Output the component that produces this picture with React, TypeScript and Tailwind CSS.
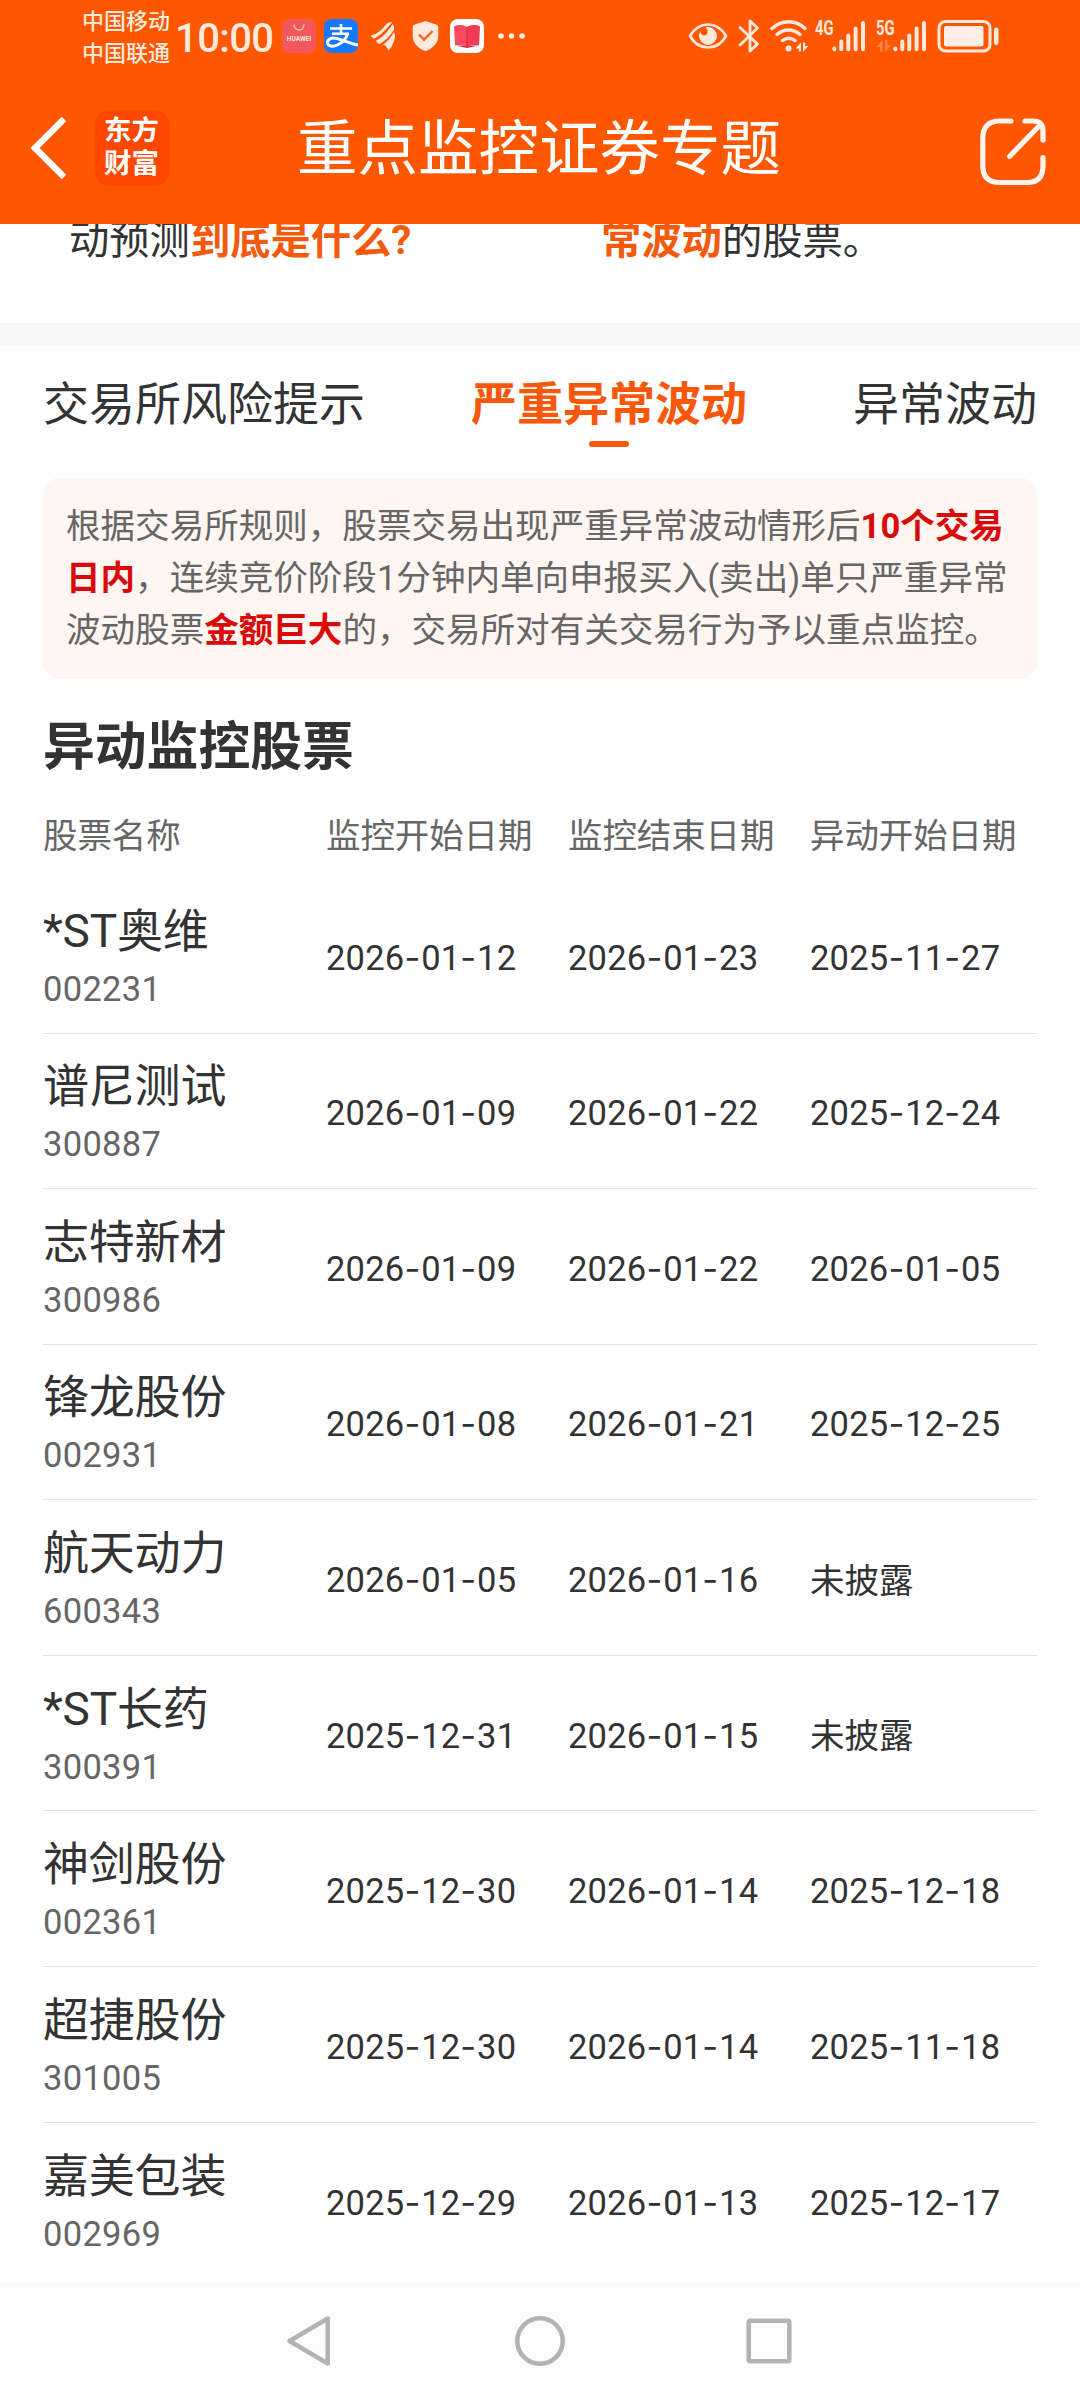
type Stock = {
	name: string
	code: string
	start: string
	end: string
	move: string
}

const stocks: Stock[] = [
	{ name: "*ST奥维", code: "002231", start: "2026-01-12", end: "2026-01-23", move: "2025-11-27" },
	{ name: "谱尼测试", code: "300887", start: "2026-01-09", end: "2026-01-22", move: "2025-12-24" },
	{ name: "志特新材", code: "300986", start: "2026-01-09", end: "2026-01-22", move: "2026-01-05" },
	{ name: "锋龙股份", code: "002931", start: "2026-01-08", end: "2026-01-21", move: "2025-12-25" },
	{ name: "航天动力", code: "600343", start: "2026-01-05", end: "2026-01-16", move: "未披露" },
	{ name: "*ST长药", code: "300391", start: "2025-12-31", end: "2026-01-15", move: "未披露" },
	{ name: "神剑股份", code: "002361", start: "2025-12-30", end: "2026-01-14", move: "2025-12-18" },
	{ name: "超捷股份", code: "301005", start: "2025-12-30", end: "2026-01-14", move: "2025-11-18" },
	{ name: "嘉美包装", code: "002969", start: "2025-12-29", end: "2026-01-13", move: "2025-12-17" },
]

function SignalBars() {
	return (
		<svg width="34" height="33" viewBox="0 0 34 33" stroke="#ffe9dc" strokeWidth="4" strokeLinecap="round">
			<path d="M2.3 29.5v.8M9.3 22.5v7.8M16.3 16.5v13.8M23.6 9.5v20.8M31 4v26.3" />
		</svg>
	)
}

function StatusBar() {
	return (
		<div className="flex h-[75px] items-start text-[#ffe9dc]">
			<div className="ml-[82px] mt-[6px] w-[93px] whitespace-nowrap text-[22px] font-medium leading-[32px]">
				<div>中国移动</div>
				<div>中国联通</div>
			</div>
			<div className="mt-[15px] w-[107px] whitespace-nowrap text-[40px] font-medium leading-[48px] tracking-[-0.6px]">
				10:00
			</div>

			{/* Notification icons */}
			<div className="mt-[19px] flex h-[34px] items-center">
				<div className="flex h-[34px] w-[34px] flex-col items-center rounded-[8px] bg-[#f2585b]">
					<svg className="mt-[5px]" width="14" height="8" viewBox="0 0 14 8" fill="none" stroke="#ffc3b4" strokeWidth="1.5" strokeLinecap="round">
						<path d="M2 1c.5 3.5 2.5 5 5 5s4.5-1.5 5-5" />
					</svg>
					<span className="mt-[3px] text-[6.5px] font-bold leading-[8px]">HUAWEI</span>
				</div>
				<div className="ml-[8px] h-[34px] w-[34px] overflow-hidden rounded-[8px] bg-[#1677ff]">
					<svg width="34" height="34" viewBox="0 0 34 34" fill="none" stroke="#fff">
						<path d="M6 9.5h22M17 5v9.500M8 14.7h17" strokeWidth="2.600" />
						<path d="M24 14.5c-2 5-6 9.500-10.500 11.500C9 28 3.500 27.500 3.500 23.500c0-3.500 4-5 8-4.300 6 1 13 5.300 23 7" strokeWidth="3" />
					</svg>
				</div>
				<svg className="ml-[13px]" width="25" height="30" viewBox="0 0 25 30" fill="#ffe9dc">
					<path d="M0 14.5C5 13.5 10 10 14 4.5c2.500-3 5-4 7-3C16 7.500 9 15 3.500 17.500 1.500 17.500.5 16 0 14.500z" />
					<path d="M5 19.5C11 17 17 11 21.500 3c1.500 1.500 2 4 1.500 6-4 6-9 11-14.500 14C6.500 22.500 5.500 21 5 19.500z" />
					<path d="M12 23.5c4.500-3 8-7 11-12.500 1.500 2.500 1 6 0 9-1 3.500-3 7-5.500 9.500-1-2.500-2.500-5-5.500-6z" />
				</svg>
				<svg className="ml-[16px]" width="27" height="32" viewBox="0 0 27 32">
					<path d="M13.500 1 24 4.500c1.500.5 2.300 1.500 2.300 3V16c0 7-5.500 12.500-12.800 15.200C6 28.500.7 23 .7 16V7.500c0-1.500.8-2.500 2.300-3z" fill="#ffe9dc" />
					<path d="m7 14.500 5 5.200 8.500-8.700" fill="none" stroke="#f06a2a" strokeWidth="2.500" />
				</svg>
				<div className="ml-[11px] flex h-[34px] w-[34px] items-center justify-center rounded-[8px] bg-white">
					<svg width="28" height="24" viewBox="0 0 28 24">
						<path d="M2.500 21.500h23L14 24z" fill="#c22740" />
						<path d="M1 2.500C5 .5 10 .5 14 3v20c-4-2-8-2.500-12-1.500z" fill="#fb4a60" />
						<path d="M27 2.500C23 .5 18 .5 14 3v20c4-2 8-2.500 12-1.500z" fill="#f23c54" />
						<path d="M14 3v20" stroke="#d92c46" strokeWidth="1.200" />
					</svg>
				</div>
				<svg className="ml-[13px]" width="28" height="8" viewBox="0 0 28 8" fill="#ffe9dc">
					<circle cx="4" cy="4" r="2.800" />
					<circle cx="14.500" cy="4" r="2.800" />
					<circle cx="25" cy="4" r="2.800" />
				</svg>
			</div>

			{/* System icons */}
			<div className="ml-[163px] mt-[19px] flex h-[34px] items-start">
				<svg className="mt-[3px]" width="40" height="28" viewBox="0 0 40 28">
					<path d="M2 14C6.500 6 12.500 2.500 20 2.500S33.500 6 38 14c-4.500 8-10.500 11.500-18 11.500S6.500 22 2 14z" fill="none" stroke="#ffe9dc" strokeWidth="2.700" strokeLinejoin="round" />
					<path d="M20 5a9 9 0 1 1-9 9c0-1.800.5-3 1.200-4.200 1 3 3 4.200 5 3.700C20 12.500 20.500 8 17.500 5.300 18.300 5 19 5 20 5z" fill="#ffe9dc" />
				</svg>
				<svg className="ml-[10px]" width="22" height="34" viewBox="0 0 22 34" fill="none" stroke="#ffe9dc" strokeWidth="2.800" strokeLinecap="round" strokeLinejoin="round">
					<path d="M2 8.500 19.500 25 12 32V2l7.500 7L2 26" />
				</svg>
				<svg className="ml-[10px]" width="39" height="34" viewBox="0 0 39 34" fill="none" stroke="#ffe9dc" strokeWidth="3.400" strokeLinecap="round">
					<path d="M2 9.500c10-9 23.500-9 33 0M7 15.500c7-6 16-6 23 0M12.500 21.500c4-3 8.500-3 12.500 0" />
					<circle cx="18.500" cy="29.500" r="3" fill="#ffe9dc" stroke="none" />
					<path d="M25.500 29.500 31 23.500v9h-2.200v-3zM38.500 27l-5.500 6v-9.500h2.200V27z" fill="#ffe9dc" stroke="none" />
				</svg>
				<div className="ml-[6px] flex items-start">
					<span className="w-[17px] origin-left scale-x-[.74] font-['Roboto'] text-[20px] font-bold leading-[18px]">4G</span>
					<SignalBars />
				</div>
				<div className="ml-[10px] flex items-start">
					<div className="w-[17px]">
						<span className="block origin-left scale-x-[.74] font-['Roboto'] text-[20px] font-bold leading-[18px]">5G</span>
						<svg className="mt-[3px]" width="16" height="12" viewBox="0 0 16 12" fill="#ff8144">
							<path d="M0 7 6.500 0v12H4V7zM15.500 5 9 12V0h2.500v5z" />
						</svg>
					</div>
					<SignalBars />
				</div>
				<svg className="ml-[10px]" width="62" height="34" viewBox="0 0 62 34">
					<rect x="2" y="2.500" width="51" height="29.500" rx="6.500" fill="none" stroke="#ffe9dc" strokeWidth="3" />
					<rect x="7" y="7" width="39.500" height="20.500" rx="2" fill="#ffeee5" />
					<rect x="57" y="8.500" width="4.500" height="17.500" rx="2.200" fill="#ffe9dc" />
				</svg>
			</div>
		</div>
	)
}

function TitleBar() {
	return (
		<div className="flex h-[149px] items-start text-white">
			<svg className="ml-[29px] mt-[41px]" width="40" height="64" viewBox="0 0 40 64" fill="none" stroke="#fff" strokeWidth="6.500">
				<path d="M35 3 6 32l29 29" />
			</svg>
			<div className="ml-[25px] mt-[35px] h-[76px] w-[76px] rounded-[16px] bg-[#ff4700] pl-[10px] pt-[4px] text-[27.5px] font-bold leading-[33px]">
				<div>东方</div>
				<div>财富</div>
			</div>
			<h1 className="ml-[127px] mt-[35px] w-[683px] whitespace-nowrap text-[60.5px] font-normal leading-[80px]">
				重点监控证券专题
			</h1>
			<svg className="mt-[42px]" width="68" height="70" viewBox="0 0 68 70" fill="none" stroke="#fff3ec" strokeWidth="5.200" strokeLinecap="round" strokeLinejoin="round">
				<path d="M31 4H20Q2.800 4 2.800 21v28q0 16.500 17.200 16.500h27Q63 65.500 63 49v-8.500M45 4h8q10 0 10 10V23M61 7 29.500 39.500" />
			</svg>
		</div>
	)
}

function DateText({ value }: { value: string }) {
	if (!value.includes("-")) return <span className="pt-[6px]">{value}</span>

	return (
		<span className="pt-[5px] tracking-[0.22px]">
			{value.split("-").map((part, i) => (
				<span key={i}>
					{i > 0 && <span className="font-['Inter'] tracking-[0.8px]">-</span>}
					{part}
				</span>
			))}
		</span>
	)
}

function StockRow({ stock, last }: { stock: Stock; last: boolean }) {
	return (
		<div
			className={
				last
					? "grid h-[155.57px] grid-cols-[283px_242px_242px_227px] items-center"
					: "grid h-[155.57px] grid-cols-[283px_242px_242px_227px] items-center border-b border-[#e3e3e3]"
			}
		>
			<div className="pt-[3px]">
				<div className="text-[46px] leading-[64px] tracking-[-0.2px]">{stock.name}</div>
				<div className="text-[34.5px] leading-[52px] tracking-[0.3px] text-[#666]">{stock.code}</div>
			</div>
			<DateText value={stock.start} />
			<DateText value={stock.end} />
			<DateText value={stock.move} />
		</div>
	)
}

export default function App() {
	return (
		<div className="flex h-[2400px] w-[1080px] flex-col overflow-hidden bg-white font-['Roboto','Noto_Sans_CJK_SC',sans-serif] text-[#333]">
			<header className="h-[224px] shrink-0 bg-[#ff5600]">
				<StatusBar />
				<TitleBar />
			</header>

			{/* Bottom of the intro cards, scrolled under the header */}
			<section className="flex h-[99px] shrink-0 items-start overflow-hidden whitespace-nowrap pl-[69px] text-[40.3px] leading-[60px]">
				<p className="-mt-[13px] w-[532px]">
					动预测<b className="text-[#f55a0c]">到底是什么?</b>
				</p>
				<p className="-mt-[13px]">
					<b className="text-[#f55a0c]">常波动</b>的股票。
				</p>
			</section>
			<div className="h-[23px] shrink-0 bg-[#f7f7fa]" />

			<main className="flex-1 overflow-hidden px-[43px]">
				<nav className="flex h-[132px] justify-between pt-[25px] text-[46px] leading-[66px]">
					<span>交易所风险提示</span>
					<div className="flex flex-col items-center font-bold text-[#f9580a]">
						<span>严重异常波动</span>
						<i className="mt-[4px] h-[6px] w-[40px] rounded-full bg-[#f55a0c]" />
					</div>
					<span>异常波动</span>
				</nav>

				<div className="h-[201px] whitespace-nowrap rounded-[17px] bg-[#fff5f1] pl-[23px] pt-[22px] text-[34.55px] leading-[52px] text-[#666]">
					<div>
						根据交易所规则，股票交易出现严重异常波动情形后<b className="text-[#d90a0a]">10个交易</b>
					</div>
					<div>
						<b className="text-[#d90a0a]">日内</b>，连续竞价阶段1分钟内单向申报买入(卖出)单只严重异常
					</div>
					<div>
						波动股票<b className="text-[#d90a0a]">金额巨大</b>的，交易所对有关交易行为予以重点监控。
					</div>
				</div>

				<h2 className="mt-[29px] text-[51.8px] font-bold leading-[80px]">异动监控股票</h2>

				<div className="text-[34.5px] leading-[52px]">
					<div className="grid h-[90px] grid-cols-[283px_242px_242px_227px] pt-[22px] tracking-[-0.1px] text-[#666]">
						<span>股票名称</span>
						<span>监控开始日期</span>
						<span>监控结束日期</span>
						<span>异动开始日期</span>
					</div>
					{stocks.map((stock, i) => (
						<StockRow key={stock.code} stock={stock} last={i === stocks.length - 1} />
					))}
				</div>
			</main>

			{/* System navigation */}
			<footer className="flex h-[118px] shrink-0 items-center bg-[#fcfcfc] pl-[285px]">
				<svg width="46" height="54" viewBox="0 0 46 54" fill="none" stroke="#b3b3b3" strokeWidth="4.500" strokeLinejoin="round">
					<path d="M42.700 4.500v45L4.500 27z" />
				</svg>
				<svg className="ml-[182px]" width="54" height="54" viewBox="0 0 54 54" fill="none" stroke="#b3b3b3" strokeWidth="4.500">
					<circle cx="27" cy="27" r="22.700" />
				</svg>
				<svg className="ml-[175px]" width="54" height="54" viewBox="0 0 54 54" fill="none" stroke="#b3b3b3" strokeWidth="4.500">
					<rect x="6.700" y="6.700" width="40.600" height="40.600" rx="1.500" />
				</svg>
			</footer>
		</div>
	)
}
